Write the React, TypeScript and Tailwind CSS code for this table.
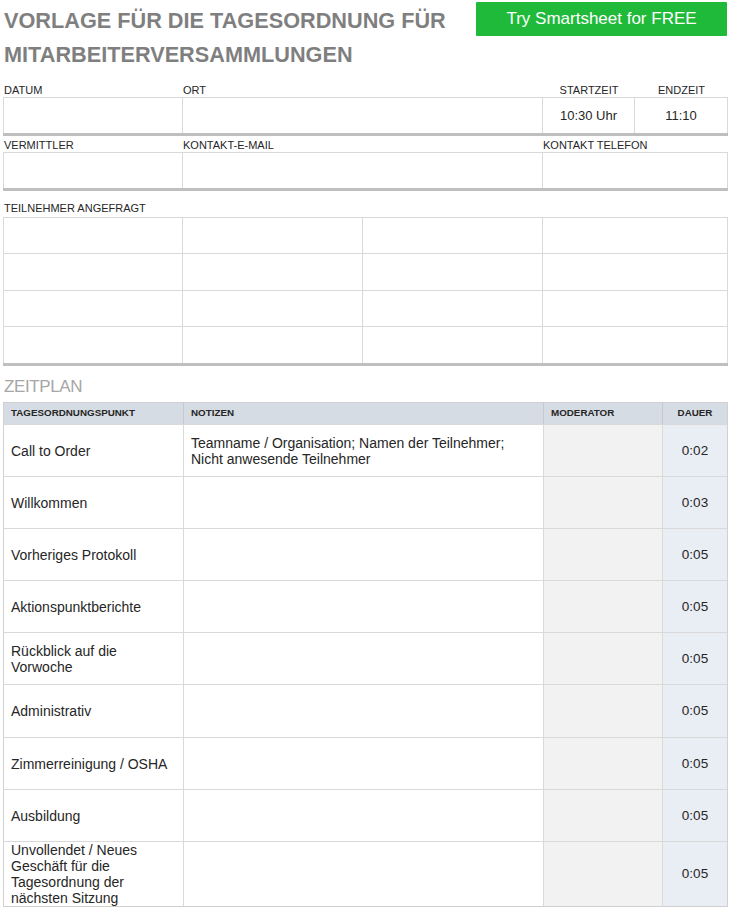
import React from "react";

const font = { fontFamily: '"Liberation Sans", Arial, sans-serif' };

const rows: { item: string; notes?: string; dur: string; h: string }[] = [
  { item: "Call to Order", notes: "Teamname / Organisation; Namen der Teilnehmer; Nicht anwesende Teilnehmer", dur: "0:02", h: "h-[52px]" },
  { item: "Willkommen", dur: "0:03", h: "h-[52px]" },
  { item: "Vorheriges Protokoll", dur: "0:05", h: "h-[52px]" },
  { item: "Aktionspunktberichte", dur: "0:05", h: "h-[52px]" },
  { item: "Rückblick auf die Vorwoche", dur: "0:05", h: "h-[52px]" },
  { item: "Administrativ", dur: "0:05", h: "h-[53px]" },
  { item: "Zimmerreinigung / OSHA", dur: "0:05", h: "h-[52px]" },
  { item: "Ausbildung", dur: "0:05", h: "h-[52px]" },
  { item: "Unvollendet / Neues Geschäft für die Tagesordnung der nächsten Sitzung", dur: "0:05", h: "h-[65px]" },
];

export default function App() {
  return (
    <div className="w-[730px] h-[910px] bg-white text-[#262626] overflow-hidden" style={font}>
      <div className="flex justify-between pl-[4px] pr-[3px]">
        <h1 className="pt-[4px] text-[21.7px] leading-[34px] font-bold text-[#7f7f7f]">
          VORLAGE FÜR DIE TAGESORDNUNG FÜR
          <br />
          MITARBEITERVERSAMMLUNGEN
        </h1>
        <div className="mt-[2px] w-[251px] h-[34px] bg-[#1fba3a] text-white text-[17px] flex items-center justify-center rounded-[1px]">
          Try Smartsheet for FREE
        </div>
      </div>

      <div className="pl-[3px] pr-[2px]">
        {/* Row 1 */}
        <div className="mt-[11px] grid grid-cols-[180px_360px_92px_93px] text-[11px] h-[14px] leading-[14px] uppercase">
          <div className="pl-[1px]">DATUM</div>
          <div>ORT</div>
          <div className="text-center">STARTZEIT</div>
          <div className="text-center">ENDZEIT</div>
        </div>
        <div className="grid grid-cols-[180px_360px_92px_93px] h-[39px] border-t border-[#d9d9d9] border-b-[3px] border-b-[#bfbfbf]">
          <div className="border-l border-r border-[#d9d9d9]" />
          <div className="border-r border-[#d9d9d9]" />
          <div className="border-r border-[#d9d9d9] flex items-center justify-center text-[13px]">10:30 Uhr</div>
          <div className="border-r border-[#d9d9d9] flex items-center justify-center text-[13px]">11:10</div>
        </div>

        {/* Row 2 */}
        <div className="mt-[2px] grid grid-cols-[180px_360px_185px] text-[11px] h-[14px] leading-[14px]">
          <div className="pl-[1px]">VERMITTLER</div>
          <div>KONTAKT-E-MAIL</div>
          <div>KONTAKT TELEFON</div>
        </div>
        <div className="grid grid-cols-[180px_360px_185px] h-[39px] border-t border-[#d9d9d9] border-b-[3px] border-b-[#bfbfbf]">
          <div className="border-l border-r border-[#d9d9d9]" />
          <div className="border-r border-[#d9d9d9]" />
          <div className="border-r border-[#d9d9d9]" />
        </div>

        {/* Teilnehmer */}
        <div className="mt-[10px] text-[11px] h-[15px] leading-[14px] pl-[1px]">TEILNEHMER ANGEFRAGT</div>
        <div className="mt-[1px] border-t border-[#d9d9d9] border-b-[3px] border-b-[#bfbfbf]">
          {[0, 1, 2, 3].map((r) => (
            <div
              key={r}
              className={`grid grid-cols-[180px_180px_180px_185px] h-[36.25px] ${r < 3 ? "border-b border-[#d9d9d9]" : ""}`}
            >
              <div className="border-l border-r border-[#d9d9d9]" />
              <div className="border-r border-[#d9d9d9]" />
              <div className="border-r border-[#d9d9d9]" />
              <div className="border-r border-[#d9d9d9]" />
            </div>
          ))}
        </div>

        {/* Zeitplan */}
        <div className="mt-[10px] text-[17px] leading-[22px] tracking-[-0.4px] text-[#a6a6a6] pl-[1px]">ZEITPLAN</div>
        <div className="mt-[4px] border border-[#d0d0d0]">
          <div className="grid grid-cols-[180px_360px_119px_64px] h-[21px] bg-[#d6dce4] text-[9.8px] font-bold text-[#262626]">
            <div className="pl-[7px] flex items-center border-r border-[#c4c9d0]">TAGESORDNUNGSPUNKT</div>
            <div className="pl-[7px] flex items-center border-r border-[#c4c9d0]">NOTIZEN</div>
            <div className="pl-[7px] flex items-center border-r border-[#c4c9d0]">MODERATOR</div>
            <div className="flex items-center justify-center">DAUER</div>
          </div>
          {rows.map((r, i) => (
            <div
              key={i}
              className={`grid grid-cols-[180px_360px_119px_64px] ${r.h} border-t border-[#d9d9d9] text-[14px] leading-[16px]`}
            >
              <div className="pl-[7px] pr-[6px] flex items-center border-r border-[#d9d9d9]">{r.item}</div>
              <div className="pl-[7px] pr-[16px] flex items-center border-r border-[#d9d9d9]">{r.notes ?? ""}</div>
              <div className="bg-[#f2f2f2] border-r border-[#d9d9d9]" />
              <div className="bg-[#e9edf4] flex items-center justify-center text-[13.5px]">{r.dur}</div>
            </div>
          ))}
        </div>
      </div>
    </div>
  );
}
